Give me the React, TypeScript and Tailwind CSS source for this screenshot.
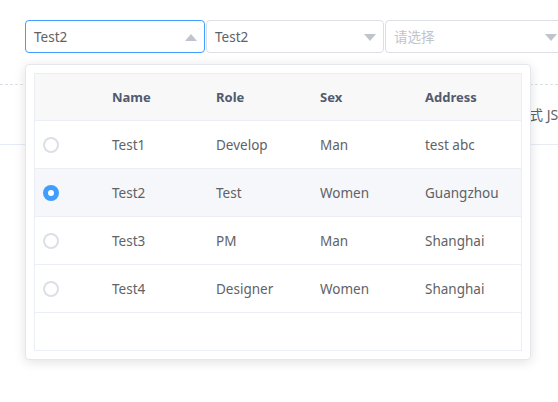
import React from 'react'

const FONT = { fontFamily: '"Noto Sans", "Noto Sans CJK SC", sans-serif' }

type Row = { name: string; role: string; sex: string; address: string }
const ROWS: Row[] = [
  { name: 'Test1', role: 'Develop', sex: 'Man', address: 'test abc' },
  { name: 'Test2', role: 'Test', sex: 'Women', address: 'Guangzhou' },
  { name: 'Test3', role: 'PM', sex: 'Man', address: 'Shanghai' },
  { name: 'Test4', role: 'Designer', sex: 'Women', address: 'Shanghai' },
]

function Caret({ up }: { up?: boolean }) {
  return (
    <svg width="12" height="7" viewBox="0 0 12 7" className="shrink-0">
      {up ? <path d="M6 0 L12 7 L0 7 Z" fill="#c0c4cc" /> : <path d="M0 0 L12 0 L6 7 Z" fill="#c0c4cc" />}
    </svg>
  )
}

function Select({ value, placeholder, open, w }: { value?: string; placeholder?: string; open?: boolean; w: string }) {
  return (
    <div
      className={`${w} h-[33px] shrink-0 flex items-center justify-between pl-[8px] pr-[7px] pt-[1px] rounded-[4px] border bg-white ${open ? 'border-[#409eff]' : 'border-[#dcdfe6]'}`}
    >
      <span className={`text-[13.5px] ${value ? 'text-[#606266]' : 'text-[#c0c4cc]'}`}>{value ?? placeholder}</span>
      <Caret up={open} />
    </div>
  )
}

function Radio({ checked }: { checked?: boolean }) {
  return checked ? (
    <span className="w-[16px] h-[16px] rounded-full bg-[#409eff] flex items-center justify-center">
      <span className="w-[6px] h-[6px] rounded-full bg-white" />
    </span>
  ) : (
    <span className="w-[16px] h-[16px] rounded-full border-2 border-[#dcdfe6] bg-white" />
  )
}

export default function App() {
  return (
    <div className="relative w-[558px] h-[402px] overflow-hidden bg-white" style={FONT}>
      <div className="flex gap-[1px] pt-[20px] pl-[25px]">
        <Select value="Test2" open w="w-[180px]" />
        <Select value="Test2" w="w-[178px]" />
        <Select placeholder="请选择" w="w-[180px]" />
      </div>

      <div
        className="mt-[31px] h-[61px] border-t border-dashed border-[#dcdfe6] flex items-center pl-[515px] text-[14px] text-[#606266] whitespace-nowrap"
        style={{ borderBottomWidth: 1, borderBottomStyle: 'solid', borderBottomColor: '#e6ebf5' }}
      >
        格式 JS
      </div>

      <div className="absolute left-[25px] top-[64px] w-[506px] h-[296px] bg-white border border-[#e4e7ed] rounded-[4px] shadow-[0_2px_12px_rgba(0,0,0,0.12)] p-[8px]">
        <div className="h-full border border-[#ebeef5] flex flex-col">
          <div className="flex h-[47px] items-center pt-[2px] bg-[#f8f8f9] border-b border-[#ebeef5] text-[13px] font-bold text-[#515a6e]">
            <div className="w-[65px]" />
            <div className="w-[104px] pl-[12px]">Name</div>
            <div className="w-[104px] pl-[12px]">Role</div>
            <div className="w-[105px] pl-[12px]">Sex</div>
            <div className="flex-1 pl-[12px]">Address</div>
          </div>
          {ROWS.map((r, i) => (
            <div
              key={r.name}
              className={`flex h-[48px] shrink-0 items-center border-b border-[#ebeef5] text-[13.5px] text-[#606266] ${i === 1 ? 'bg-[#f5f7fa]' : 'bg-white'}`}
            >
              <div className="w-[65px] pl-[8px] flex items-center">
                <Radio checked={i === 1} />
              </div>
              <div className="w-[104px] pl-[12px] pt-[2px]">{r.name}</div>
              <div className="w-[104px] pl-[12px] pt-[2px]">{r.role}</div>
              <div className="w-[105px] pl-[12px] pt-[2px]">{r.sex}</div>
              <div className="flex-1 pl-[12px] pt-[2px]">{r.address}</div>
            </div>
          ))}
        </div>
      </div>
    </div>
  )
}
